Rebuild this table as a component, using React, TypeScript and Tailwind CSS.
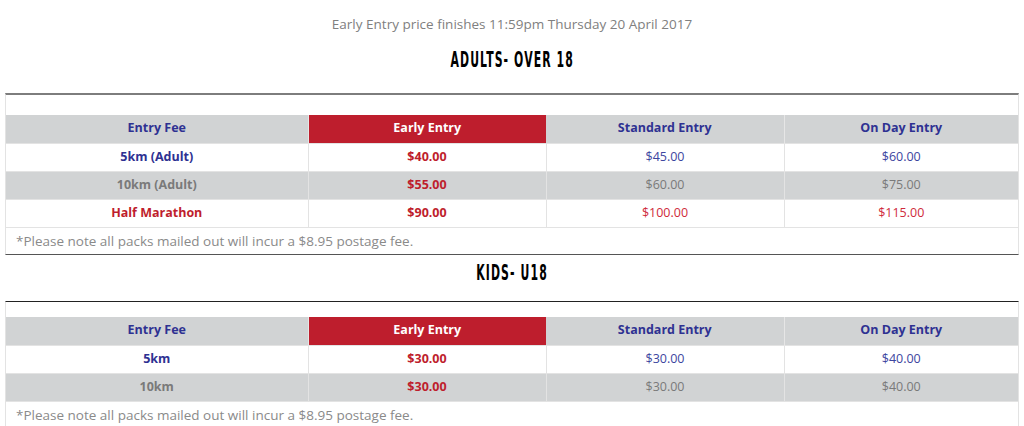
import React from 'react';

type Row = {
  label: string;
  early: string;
  standard: string;
  onDay: string;
  tone: 'navy' | 'gray' | 'red';
};

const adults: Row[] = [
  { label: '5km (Adult)', early: '$40.00', standard: '$45.00', onDay: '$60.00', tone: 'navy' },
  { label: '10km (Adult)', early: '$55.00', standard: '$60.00', onDay: '$75.00', tone: 'gray' },
  { label: 'Half Marathon', early: '$90.00', standard: '$100.00', onDay: '$115.00', tone: 'red' },
];

const kids: Row[] = [
  { label: '5km', early: '$30.00', standard: '$30.00', onDay: '$40.00', tone: 'navy' },
  { label: '10km', early: '$30.00', standard: '$30.00', onDay: '$40.00', tone: 'gray' },
];

const labelColor = (tone: Row['tone']) => {
  switch (tone) {
    case 'navy': return 'text-[#2e3192]';
    case 'gray': return 'text-[#7a7a7a]';
    case 'red': return 'text-[#be1e2d]';
  }
};

const priceColor = (tone: Row['tone']) => {
  switch (tone) {
    case 'navy': return 'text-[#3d46a0]';
    case 'gray': return 'text-[#7a7a7a]';
    case 'red': return 'text-[#cf2a3b]';
  }
};

const Heading: React.FC<{ text: string }> = ({ text }) => (
  <div className="flex justify-center">
    <span
      className="inline-block scale-x-[0.55] text-[22px] leading-none font-bold tracking-[2px] text-black"
      style={{ fontFamily: '"DejaVu Sans Condensed", "DejaVu Sans", sans-serif' }}
    >
      {text}
    </span>
  </div>
);

const PriceTable: React.FC<{ rows: Row[]; topBorder: string; spacer: string; bottomBorder: string }> = ({
  rows,
  topBorder,
  spacer,
  bottomBorder,
}) => (
  <div className={`mx-[5px] border-x border-x-[#e3e3e3] ${topBorder} ${bottomBorder}`}>
    <div className={spacer} />
    <table className="w-full border-collapse table-fixed text-[12.5px]">
      <colgroup>
        <col className="w-[302px]" />
        <col className="w-[238px]" />
        <col className="w-[238px]" />
        <col />
      </colgroup>
      <thead>
        <tr className="h-[28px] bg-[#d1d3d4] font-bold text-[#2e3192]">
          <th className="border-r border-r-[#e6e6e6] font-bold">Entry Fee</th>
          <th className="bg-[#be1e2d] font-bold text-white">Early Entry</th>
          <th className="border-r border-r-[#e6e6e6] font-bold">Standard Entry</th>
          <th className="font-bold">On Day Entry</th>
        </tr>
      </thead>
      <tbody>
        {rows.map((r, i) => (
          <tr
            key={r.label}
            className={`h-[28px] border-t border-t-[#e3e3e3] text-center ${i % 2 === 1 ? 'bg-[#d1d3d4]' : 'bg-white'}`}
          >
            <td className={`border-r border-r-[#e3e3e3] font-bold ${labelColor(r.tone)}`}>{r.label}</td>
            <td className="border-r border-r-[#e3e3e3] font-bold text-[#be1e2d]">{r.early}</td>
            <td className={`border-r border-r-[#e3e3e3] ${priceColor(r.tone)}`}>{r.standard}</td>
            <td className={priceColor(r.tone)}>{r.onDay}</td>
          </tr>
        ))}
        <tr className="h-[27px] border-t border-t-[#e3e3e3]">
          <td colSpan={4} className="pl-[10px] text-[13.5px] text-[#8a8a8a]">
            *Please note all packs mailed out will incur a $8.95 postage fee.
          </td>
        </tr>
      </tbody>
    </table>
  </div>
);

export default function App() {
  return (
    <div
      className="w-[1024px] h-[426px] overflow-hidden bg-white"
      style={{ fontFamily: '"Open Sans", sans-serif' }}
    >
      <p className="pt-[15px] text-center text-[13.5px] leading-[18px] text-[#808080]">
        Early Entry price finishes 11:59pm Thursday 20 April 2017
      </p>
      <div className="mt-[16px]">
        <Heading text="ADULTS- OVER 18" />
      </div>
      <div className="mt-[22px]">
        <PriceTable
          rows={adults}
          topBorder="border-t-2 border-t-[#7d7d7d]"
          spacer="h-[20px]"
          bottomBorder="border-b border-b-[#555]"
        />
      </div>
      <div className="mt-[7px]">
        <Heading text="KIDS- U18" />
      </div>
      <div className="mt-[17px]">
        <PriceTable
          rows={kids}
          topBorder="border-t border-t-[#222]"
          spacer="h-[15px]"
          bottomBorder=""
        />
      </div>
    </div>
  );
}
